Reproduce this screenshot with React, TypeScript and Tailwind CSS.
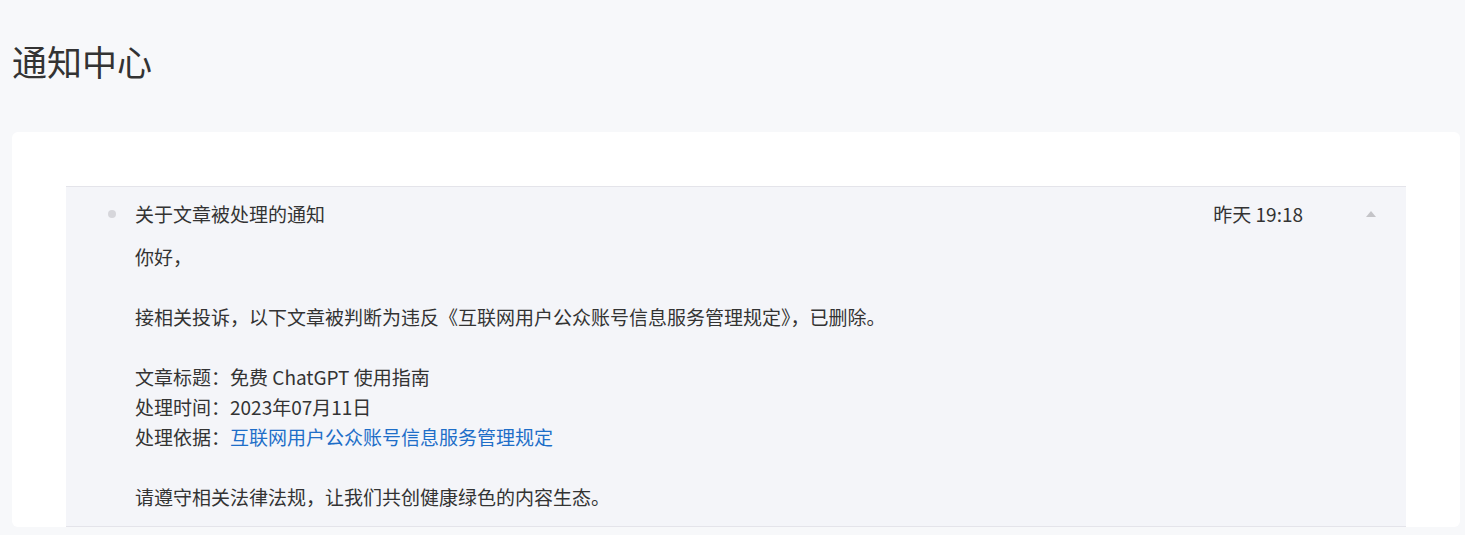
import React from "react";

export default function App() {
  const font = { fontFamily: '"Noto Sans CJK SC", "Noto Sans", sans-serif' };
  return (
    <div className="min-h-[535px] bg-[#f7f8fa] pl-[12px] pr-[5px]" style={font}>
      <div className="h-[132px] pt-[37px]">
        <h1 className="text-[35px] leading-[48px] text-[#333333] font-normal">通知中心</h1>
      </div>
      <div className="bg-white rounded-[6px] p-[54px] pb-0">
        <div className="bg-[#f4f5f9] border-y border-[#e4e4ea] pt-[12px] pb-[14px] text-[19px] text-[#333333]">
          <div className="flex items-center h-[30px]">
            <div className="w-[69px] flex justify-end pr-[19px]">
              <span className="w-[8px] h-[8px] rounded-full bg-[#d6d6db]" />
            </div>
            <div className="flex-1 leading-[30px]">关于文章被处理的通知</div>
            <div className="leading-[30px] mr-[63px]">昨天 19:18</div>
            <div className="w-[40px] flex justify-start">
              <svg width="10" height="6" viewBox="0 0 10 6">
                <path d="M0 6 L5 0 L10 6 Z" fill="#c4c4c8" />
              </svg>
            </div>
          </div>
          <div className="pl-[69px] mt-[13px] leading-[30px]">
            <p>你好，</p>
            <p className="h-[30px]"></p>
            <p>接相关投诉，以下文章被判断为违反《互联网用户公众账号信息服务管理规定》，已删除。</p>
            <p className="h-[30px]"></p>
            <p>文章标题：免费 ChatGPT 使用指南</p>
            <p>处理时间：2023年07月11日</p>
            <p>
              处理依据：<span className="text-[#1e6ec8]">互联网用户公众账号信息服务管理规定</span>
            </p>
            <p className="h-[30px]"></p>
            <p>请遵守相关法律法规，让我们共创健康绿色的内容生态。</p>
          </div>
        </div>
      </div>
    </div>
  );
}
